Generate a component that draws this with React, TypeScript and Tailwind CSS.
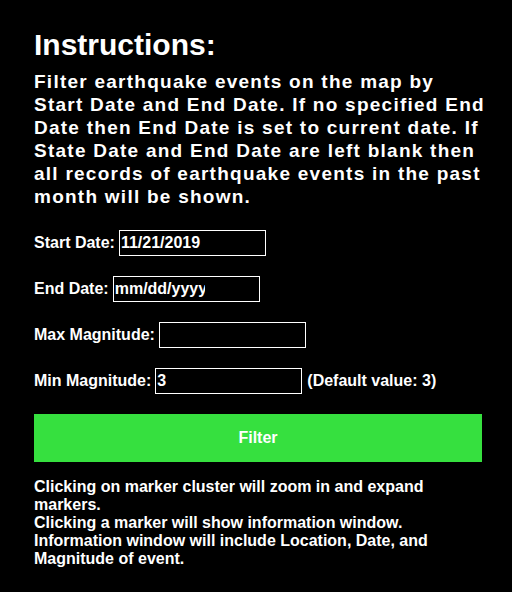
export default function App() {
  const rows = [
    { label: "Start Date:", value: "11/21/2019", note: "", clip: false },
    { label: "End Date:", value: "mm/dd/yyyy", note: "", clip: true },
    { label: "Max Magnitude:", value: "", note: "", clip: false },
    { label: "Min Magnitude:", value: "3", note: "(Default value: 3)", clip: false },
  ];

  return (
    <div className="min-h-[592px] bg-black pl-[34px] pt-[28px] font-['Liberation_Sans',Arial,sans-serif] font-bold text-white">
      <h1 className="text-[30px] leading-[34px]">Instructions:</h1>
      <p className="mt-[8px] w-[454px] text-[19px] leading-[23px] tracking-[1.25px]">
        Filter earthquake events on the map by Start Date and End Date. If no
        specified End Date then End Date is set to current date. If State Date
        and End Date are left blank then all records of earthquake events in the
        past month will be shown.
      </p>

      <div className="mt-[22px] flex flex-col gap-[20px]">
        {rows.map((r) => (
          <div key={r.label} className="flex h-[26px] items-center text-[16px]">
            <span className="mr-[4px]">{r.label}</span>
            <div className="flex h-[26px] w-[147px] items-center overflow-hidden whitespace-nowrap border border-white px-[1px]">
              <span className={r.clip ? "w-[90px] shrink-0 overflow-hidden" : ""}>{r.value}</span>
            </div>
            {r.note && <span className="ml-[5px]">{r.note}</span>}
          </div>
        ))}
      </div>

      <button className="mt-[20px] h-[48px] w-[448px] bg-[#36e03f] text-[16px] font-bold text-white">
        Filter
      </button>

      <div className="mt-[16px] w-[448px] text-[16px] leading-[18px]">
        <p>Clicking on marker cluster will zoom in and expand markers.</p>
        <p>Clicking a marker will show information window.</p>
        <p>Information window will include Location, Date, and Magnitude of event.</p>
      </div>
    </div>
  );
}
